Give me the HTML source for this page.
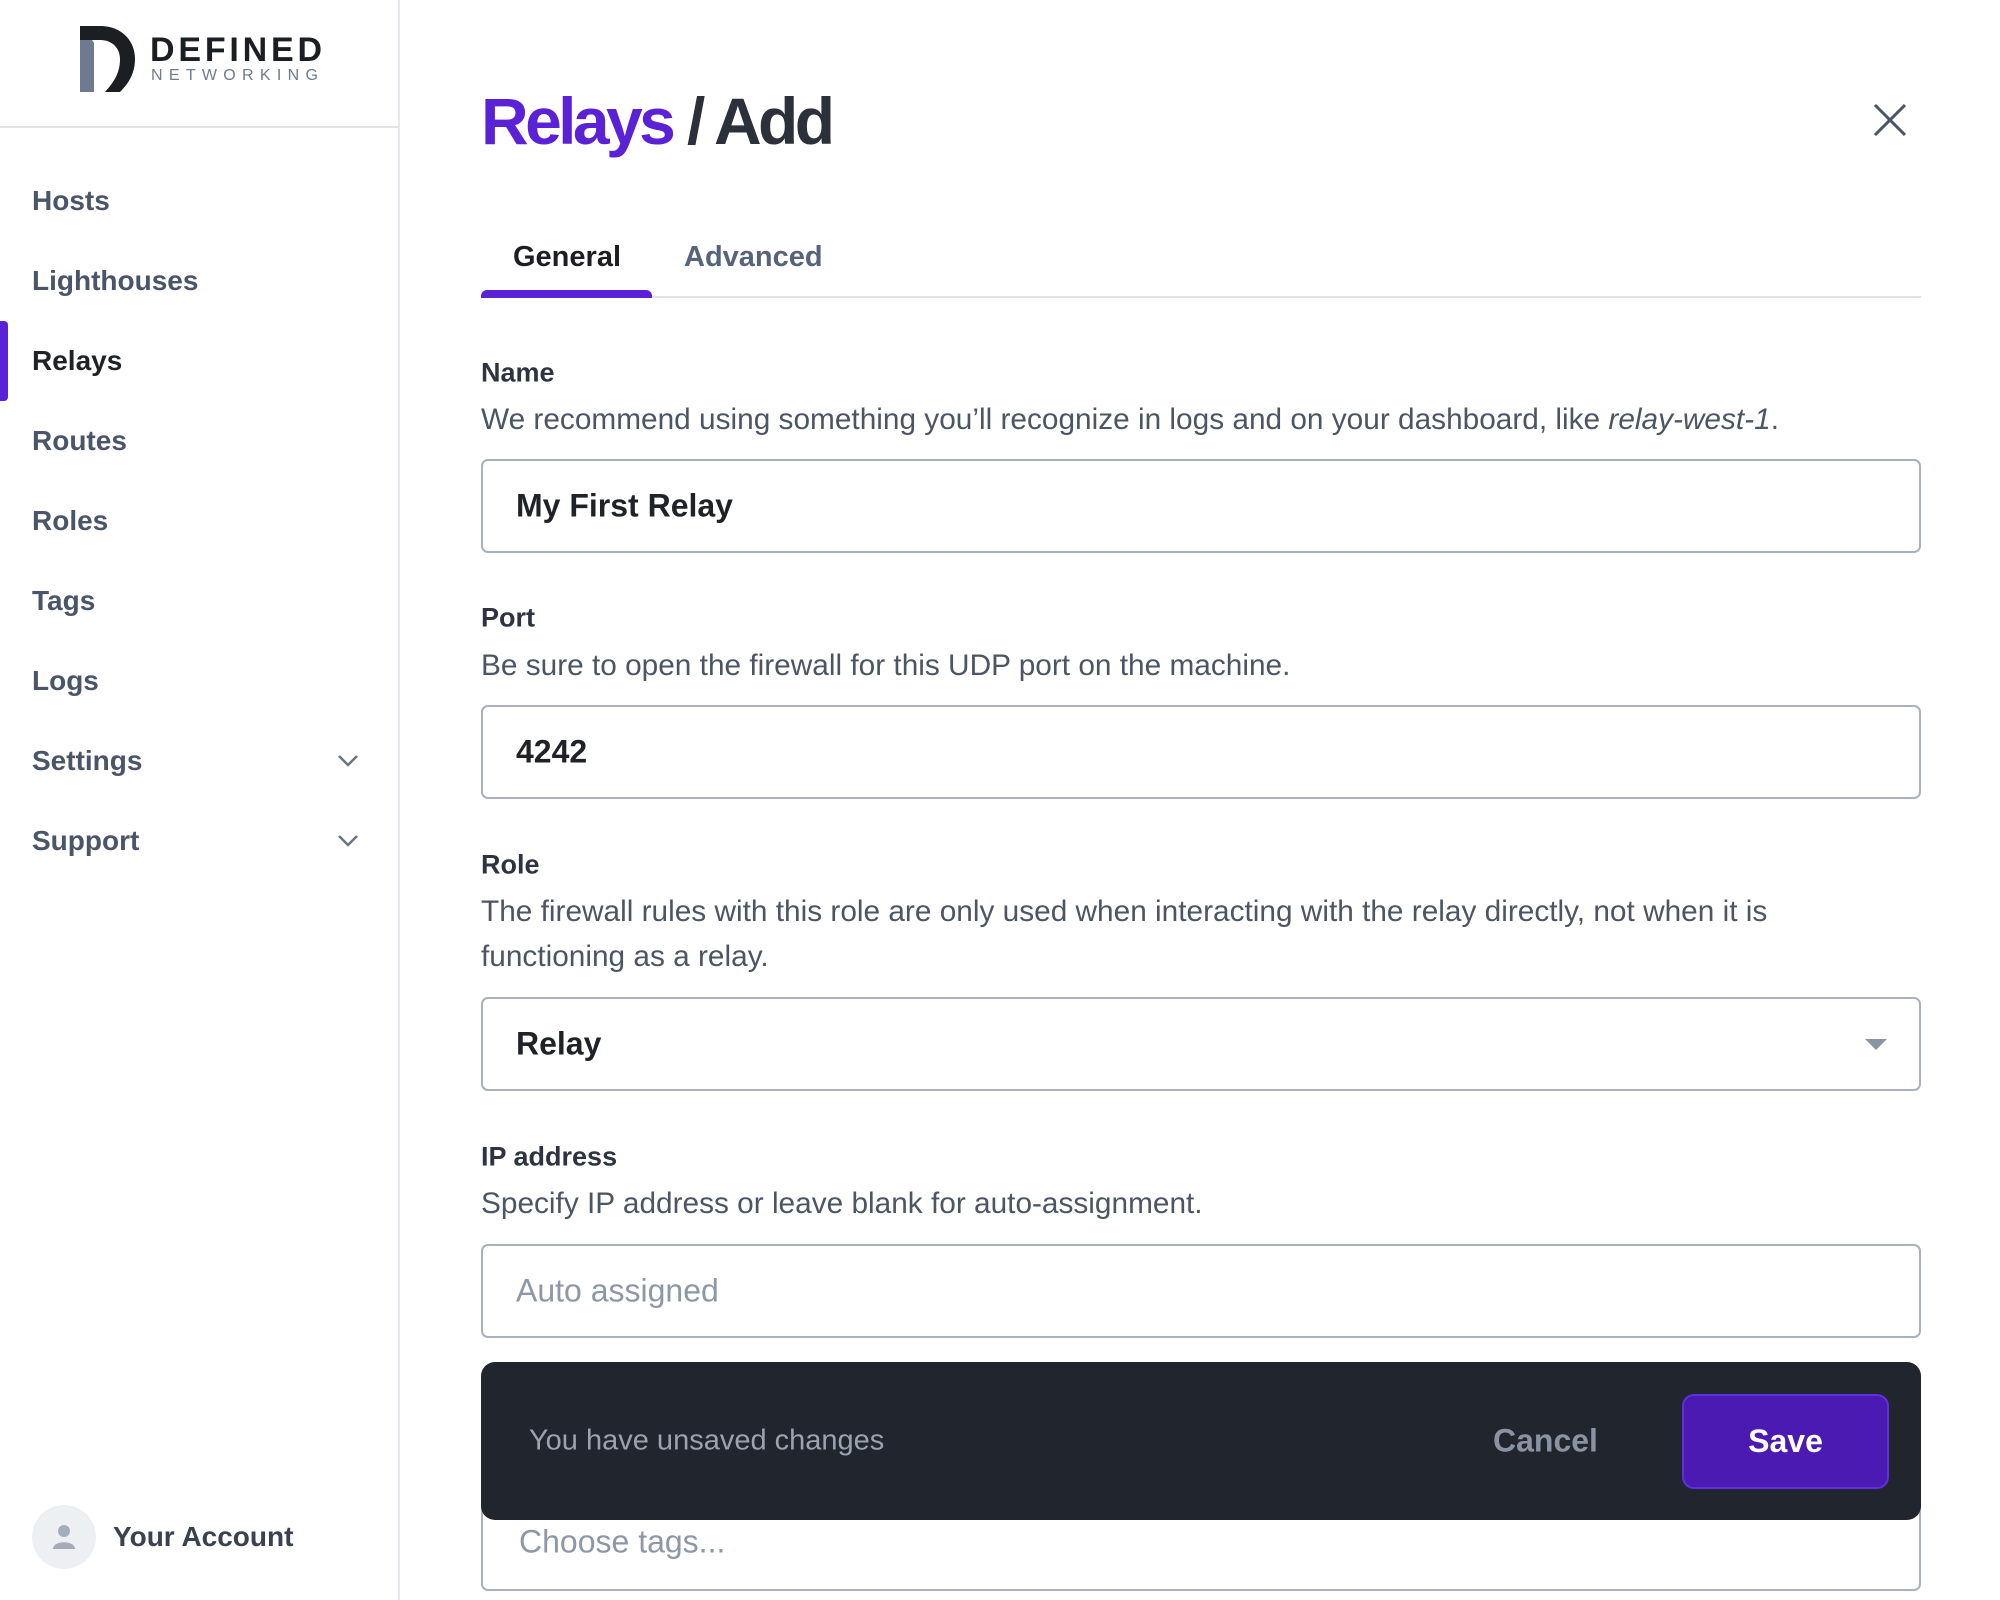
<!DOCTYPE html>
<html><head><meta charset="utf-8"><style>
*{box-sizing:border-box;margin:0;padding:0}
body{width:2000px;height:1600px;overflow:hidden;background:#fff;font-family:"Liberation Sans",Arial,sans-serif;position:relative;color:#1f2328}
.a{position:absolute;white-space:nowrap}
.side{position:absolute;left:0;top:0;width:400px;height:1600px;border-right:2px solid #e5e8ec}
.nav{position:absolute;left:32px;font-size:28px;font-weight:700;color:#4a5568;transform:translateY(-50%)}
.lbl{position:absolute;left:481px;font-size:27px;font-weight:700;color:#2d3340;transform:translateY(-50%)}
.desc{position:absolute;left:481px;font-size:29.8px;color:#4b5563;transform:translateY(-50%);white-space:nowrap}
.inp{position:absolute;left:481px;width:1440px;height:94px;border:2px solid #a9b1bd;border-radius:7px}
.val{position:absolute;left:33px;top:50%;transform:translateY(-50%);font-size:32px;font-weight:700;color:#1f2328}
.ph{color:#8d97a5;font-weight:400}
</style></head><body>
<div class="side">
  <div style="position:absolute;left:0;top:126px;width:400px;height:2px;background:#e1e5ea"></div>
  <svg class="a" style="left:80px;top:26px" width="56" height="66" viewBox="0 0 56 66">
    <path d="M0 0 H20 C42 0 55 15 55 33 C55 48 48 58 40 66 H25 C33 57 40 48 40 33 C40 22 32 14 20 14 H0 Z" fill="#1b1e22"/>
    <path d="M0 14 H12 L14 17 V66 H0 Z" fill="#6e7a90"/>
  </svg>
  <div class="a" style="left:150px;top:31px;font-size:34px;font-weight:700;letter-spacing:3.8px;color:#1b1e22">DEFINED</div>
  <div class="a" style="left:151px;top:67px;font-size:16px;letter-spacing:6.3px;color:#6e7a90">NETWORKING</div>
  <div class="nav" style="top:201px">Hosts</div>
  <div class="nav" style="top:281px">Lighthouses</div>
  <div style="position:absolute;left:0;top:321px;width:8px;height:80px;background:#5b21d6;border-radius:0 4px 4px 0"></div>
  <div class="nav" style="top:361px;color:#1f2328">Relays</div>
  <div class="nav" style="top:441px">Routes</div>
  <div class="nav" style="top:521px">Roles</div>
  <div class="nav" style="top:601px">Tags</div>
  <div class="nav" style="top:681px">Logs</div>
  <div class="nav" style="top:761px">Settings</div>
  <div class="nav" style="top:841px">Support</div>
  <svg class="a" style="left:337px;top:754px" width="22" height="14" viewBox="0 0 22 14"><path d="M2 2 L11 11 L20 2" stroke="#6b7585" stroke-width="2.5" fill="none"/></svg>
  <svg class="a" style="left:337px;top:834px" width="22" height="14" viewBox="0 0 22 14"><path d="M2 2 L11 11 L20 2" stroke="#6b7585" stroke-width="2.5" fill="none"/></svg>
  <div style="position:absolute;left:32px;top:1505px;width:64px;height:64px;border-radius:50%;background:#edf0f3"></div>
  <svg class="a" style="left:52px;top:1523px" width="24" height="28" viewBox="0 0 24 28"><circle cx="12" cy="8" r="6" fill="#a3acb9"/><path d="M1 26 C1 17 23 17 23 26 Z" fill="#a3acb9"/></svg>
  <div class="nav" style="left:113px;top:1537px;color:#3a4250">Your Account</div>
</div>

<div class="a" style="left:481px;top:83px;font-size:66px;font-weight:700;letter-spacing:-3.6px;color:#5b21d6">Relays <span style="color:#2b303a">/ Add</span></div>
<svg class="a" style="left:1873px;top:103px" width="34" height="34" viewBox="0 0 34 34"><path d="M2 2 L32 32 M32 2 L2 32" stroke="#4b5563" stroke-width="3"/></svg>

<div class="a" style="left:513px;top:241px;font-size:29px;font-weight:700;color:#1b1e22">General</div>
<div class="a" style="left:684px;top:241px;font-size:29px;font-weight:700;color:#56637a">Advanced</div>
<div style="position:absolute;left:481px;top:296px;width:1440px;height:2px;background:#e1e5ea"></div>
<div style="position:absolute;left:481px;top:290px;width:171px;height:8px;background:#5b21d6;border-radius:6px 6px 0 0"></div>

<div class="lbl" style="top:373px">Name</div>
<div class="desc" style="top:420px">We recommend using something you’ll recognize in logs and on your dashboard, like <i>relay-west-1</i>.</div>
<div class="inp" style="top:459px"><div class="val">My First Relay</div></div>

<div class="lbl" style="top:618px">Port</div>
<div class="desc" style="top:666px">Be sure to open the firewall for this UDP port on the machine.</div>
<div class="inp" style="top:705px"><div class="val">4242</div></div>

<div class="lbl" style="top:865px">Role</div>
<div class="desc" style="top:912px">The firewall rules with this role are only used when interacting with the relay directly, not when it is</div>
<div class="desc" style="top:957px">functioning as a relay.</div>
<div class="inp" style="top:997px"><div class="val">Relay</div>
  <svg class="a" style="right:32px;top:40px" width="22" height="12" viewBox="0 0 22 12"><path d="M0 0 H22 L11 11 Z" fill="#8a94a3"/></svg></div>

<div class="lbl" style="top:1157px">IP address</div>
<div class="desc" style="top:1204px">Specify IP address or leave blank for auto-assignment.</div>
<div class="inp" style="top:1244px"><div class="val ph">Auto assigned</div></div>

<div class="inp" style="top:1496px;height:95px"><div class="val ph" style="left:36px;top:44px">Choose tags...</div></div>

<div style="position:absolute;left:481px;top:1362px;width:1440px;height:158px;background:#21252d;border-radius:14px"></div>
<div class="a" style="left:529px;top:1441px;transform:translateY(-50%);font-size:29px;color:#9aa3b0">You have unsaved changes</div>
<div class="a" style="left:1493px;top:1441px;transform:translateY(-50%);font-size:32px;font-weight:700;color:#8993a1">Cancel</div>
<div style="position:absolute;left:1682px;top:1394px;width:207px;height:95px;background:#4a1ab3;border:2px solid #6030e0;border-radius:12px;color:#fff;font-size:32px;font-weight:700;display:flex;align-items:center;justify-content:center">Save</div>
</body></html>
